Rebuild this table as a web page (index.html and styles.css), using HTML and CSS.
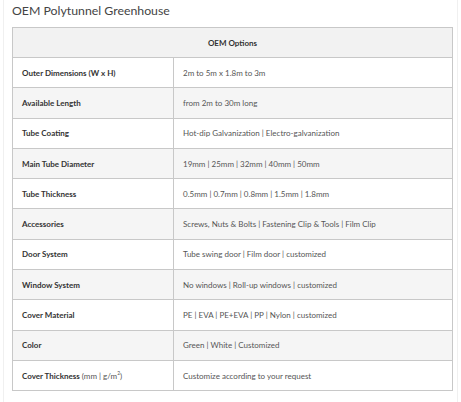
FILE: index.html
```html
<!DOCTYPE html>
<html>
<head>
<meta charset="utf-8">
<link rel="stylesheet" href="styles.css">
</head>
<body>
<div class="frame">
  <h1 class="title">OEM Polytunnel Greenhouse</h1>
  <table class="spec">
    <colgroup>
      <col class="c1">
      <col class="c2">
    </colgroup>
    <thead>
      <tr><th colspan="2">OEM Options</th></tr>
    </thead>
    <tbody>
      <tr><td class="k">Outer Dimensions (W x H)</td><td>2m to 5m x 1.8m to 3m</td></tr>
      <tr class="alt"><td class="k">Available Length</td><td>from 2m to 30m long</td></tr>
      <tr><td class="k">Tube Coating</td><td>Hot-dip Galvanization | Electro-galvanization</td></tr>
      <tr class="alt"><td class="k">Main Tube Diameter</td><td>19mm | 25mm | 32mm | 40mm | 50mm</td></tr>
      <tr><td class="k">Tube Thickness</td><td>0.5mm | 0.7mm | 0.8mm | 1.5mm | 1.8mm</td></tr>
      <tr class="alt"><td class="k">Accessories</td><td>Screws, Nuts &amp; Bolts | Fastening Clip &amp; Tools | Film Clip</td></tr>
      <tr><td class="k">Door System</td><td>Tube swing door | Film door | customized</td></tr>
      <tr class="alt"><td class="k">Window System</td><td>No windows | Roll-up windows | customized</td></tr>
      <tr><td class="k">Cover Material</td><td>PE | EVA | PE+EVA | PP | Nylon | customized</td></tr>
      <tr class="alt"><td class="k">Color</td><td>Green | White | Customized</td></tr>
      <tr><td class="k">Cover Thickness <span class="unit">(mm | g/m<sup>2</sup>)</span></td><td>Customize according to your request</td></tr>
    </tbody>
  </table>
</div>
</body>
</html>
```

FILE: styles.css
```css
html, body {
  margin: 0;
  padding: 0;
  background: #fff;
}
body {
  font-family: "Lato", "Open Sans", sans-serif;
  color: #444;
}
.frame {
  margin: 0 3px;
  height: 402px;
  box-sizing: border-box;
  border-left: 1px solid #f0f0f0;
  border-right: 1px solid #f0f0f0;
  padding: 2px 4px 0 8px;
}
.title {
  margin: 0 0 7px 0;
  font-size: 12.3px;
  font-weight: normal;
  color: #444;
  line-height: 18px;
}
.spec {
  width: 441px;
  border-collapse: collapse;
  font-size: 8px;
  table-layout: fixed;
}
.c1 { width: 161px; }
.spec th {
  height: 29px;
  background: #f2f2f2;
  border: 1px solid #c8c8c8;
  font-weight: bold;
  color: #333;
  text-align: center;
  padding: 0;
}
.spec td {
  height: 29.3px;
  border: 1px solid #c8c8c8;
  padding: 0 0 0 9px;
  color: #555;
  vertical-align: middle;
}
.spec td.k {
  font-weight: bold;
  color: #333;
}
.spec tr.alt td {
  background: #f5f5f5;
}
.unit {
  font-weight: normal;
  color: #555;
}
.unit sup {
  font-size: 5px;
  line-height: 0;
}
```
